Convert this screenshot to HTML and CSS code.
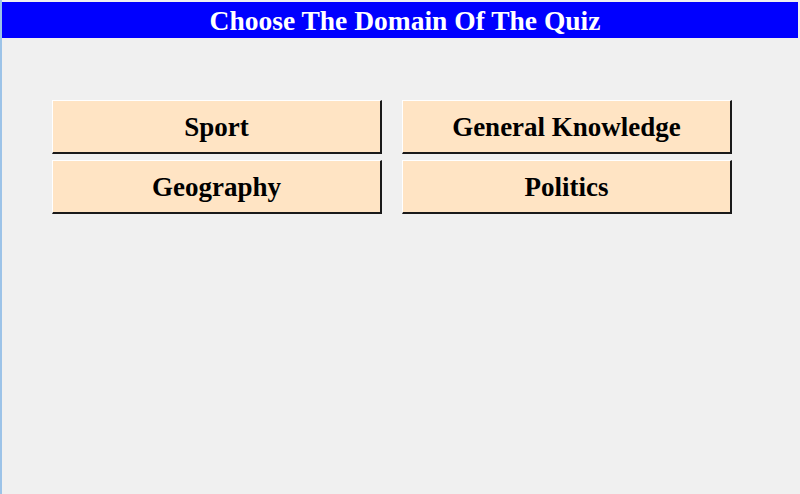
FILE: index.html
```html
<!DOCTYPE html>
<html>
<head>
<meta charset="utf-8">
<link rel="stylesheet" href="styles.css">
</head>
<body>
<div class="window">
  <h1 class="title">Choose The Domain Of The Quiz</h1>
  <div class="grid">
    <button class="btn">Sport</button>
    <button class="btn">General Knowledge</button>
    <button class="btn">Geography</button>
    <button class="btn">Politics</button>
  </div>
</div>
</body>
</html>
```
FILE: styles.css
```css
html, body {
  margin: 0;
  padding: 0;
  height: 100%;
}
body {
  background: #f0f0f0;
  font-family: "Liberation Serif", "Times New Roman", serif;
}
.window {
  height: 494px;
  box-sizing: border-box;
  border-left: 2px solid #9cc3e8;
  padding-top: 2px;
  background: #f0f0f0;
}
.title {
  margin: 0 2px 0 0;
  padding-left: 10px;
  height: 36px;
  line-height: 37px;
  background: #0000ff;
  color: #fff;
  font-size: 27.5px;
  font-weight: bold;
  text-align: center;
}
.grid {
  display: grid;
  grid-template-columns: 330px 330px;
  grid-auto-rows: 54px;
  column-gap: 20px;
  row-gap: 6px;
  margin: 62px 0 0 50px;
}
.btn {
  margin: 0;
  padding: 2px 0 0 0;
  background: #ffe4c4;
  border-style: solid;
  border-width: 1px 2px 2px 1px;
  border-color: #ffffff #1a1a1a #1a1a1a #ffffff;
  font-family: "Liberation Serif", "Times New Roman", serif;
  font-size: 27px;
  font-weight: bold;
  color: #000;
}
```
